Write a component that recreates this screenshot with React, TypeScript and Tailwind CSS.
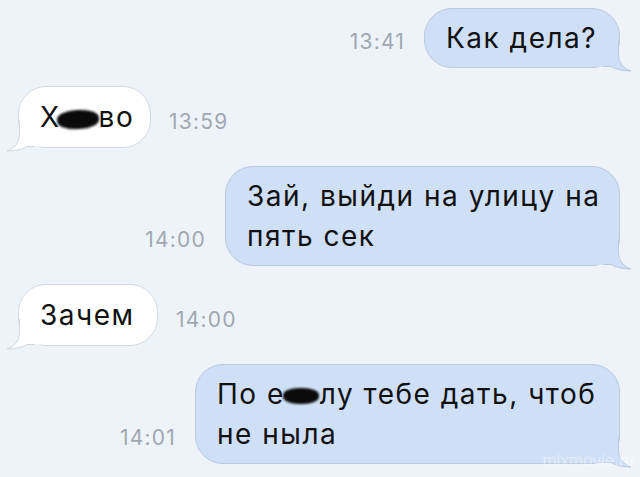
import React from 'react';

// chat screenshot: outgoing bubbles on the right, incoming on the left

const OUT_BG = '#cfe0f6';
const OUT_BORDER = '#b9c9de';
const IN_BG = '#ffffff';
const IN_BORDER = '#d3d9e2';

function Tail({ side, fill, stroke }: { side: 'left' | 'right'; fill: string; stroke: string }) {
  const isRight = side === 'right';
  return (
    <svg
      width="36"
      height="32"
      viewBox="0 0 36 32"
      className={`absolute ${isRight ? '-right-[14px]' : '-left-[14px]'} -bottom-[6px]`}
      style={isRight ? undefined : { transform: 'scaleX(-1)' }}
    >
      <path d="M21.5 0 L21.5 14 Q22 26 34 30 Q22 30 14 25.5 L0 25.5 L0 0 Z" fill={fill} />
      <path d="M21.5 0 L21.5 14 Q22 26 34 30 Q22 30 14 25.5 L6 25.5" fill="none" stroke={stroke} strokeWidth="1" />
    </svg>
  );
}

// censor scribble over a word
function Blob({ w, h, className = '' }: { w: number; h: number; className?: string }) {
  return (
    <span
      className={`inline-block align-middle bg-[#0a0a0a] rounded-[45%] blur-[0.8px] ${className}`}
      style={{ width: w, height: h }}
    />
  );
}

function Time({ children }: { children: React.ReactNode }) {
  return (
    <span className="text-[21px] leading-[22px] tracking-[1.2px] mb-[15px] text-[#a0a7b2]">
      {children}
    </span>
  );
}

function Outgoing({ time, width, children }: { time: string; width: string; children: React.ReactNode }) {
  return (
    <div className="flex justify-end items-end gap-[19px] pr-[20px]">
      <Time>{time}</Time>
      <div
        className={`relative ${width} rounded-[28px] border border-[#b9c9de] bg-[#cfe0f6] px-[21px] py-[9px] text-[28px] leading-[40px] tracking-[1.5px] text-[#111]`}
      >
        <Tail side="right" fill={OUT_BG} stroke={OUT_BORDER} />
        <div className="relative whitespace-nowrap">{children}</div>
      </div>
    </div>
  );
}

function Incoming({ time, width, children }: { time: string; width: string; children: React.ReactNode }) {
  return (
    <div className="flex justify-start items-end gap-[18px] pl-[18px]">
      <div
        className={`relative ${width} rounded-[28px] border border-[#d3d9e2] bg-white px-[21px] py-[10px] text-[28px] leading-[40px] tracking-[1.5px] text-[#111]`}
      >
        <Tail side="left" fill={IN_BG} stroke={IN_BORDER} />
        <div className="relative whitespace-nowrap">{children}</div>
      </div>
      <Time>{time}</Time>
    </div>
  );
}

export default function App() {
  return (
    <div className="relative w-[640px] h-[477px] overflow-hidden bg-[#eef3fa] font-['Inter','Liberation_Sans',sans-serif]">
      <div className="flex flex-col gap-[18px] pt-[8px]">
        <Outgoing time="13:41" width="w-[196px]">Как дела?</Outgoing>

        <Incoming time="13:59" width="w-[133px]">
          Х<Blob w={42} h={19} className="-ml-[4px] -rotate-3" />во
        </Incoming>

        <Outgoing time="14:00" width="w-[395px]">
          Зай, выйди на улицу на
          <br />
          пять сек
        </Outgoing>

        <Incoming time="14:00" width="w-[140px]">Зачем</Incoming>

        <Outgoing time="14:01" width="w-[425px]">
          По е<Blob w={36} h={16} className="-ml-[2px] mr-[1px]" />лу тебе дать, чтоб
          <br />
          не ныла
        </Outgoing>
      </div>

      <span className="absolute right-[6px] bottom-[6px] text-[17px] leading-[20px] text-white/40 font-['Liberation_Sans',sans-serif]">
        mixmovie.ru
      </span>
    </div>
  );
}
